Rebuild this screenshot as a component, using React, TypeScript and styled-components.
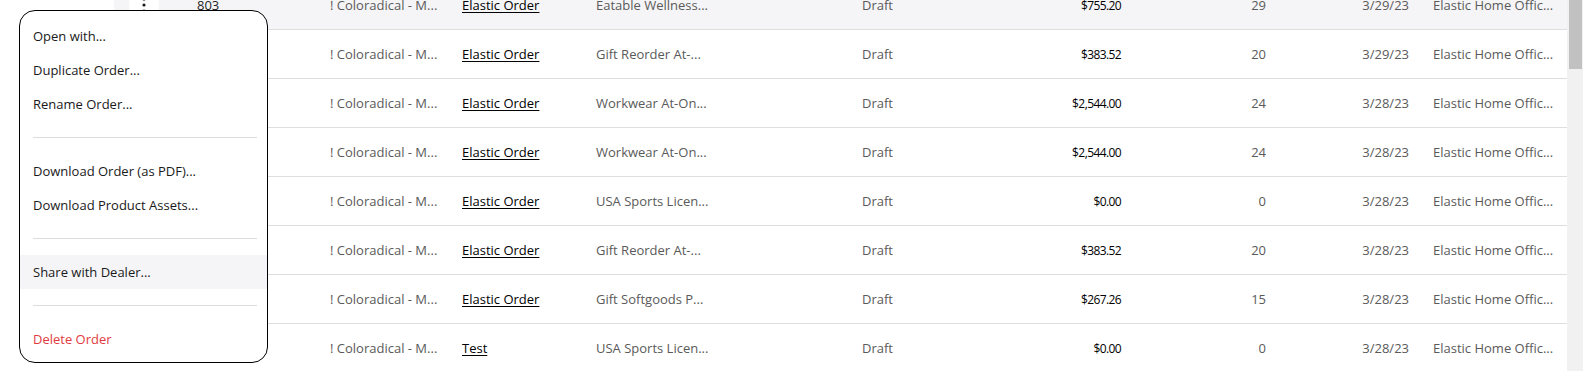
import React from 'react'
import styled, { createGlobalStyle } from 'styled-components'

const GlobalStyle = createGlobalStyle`
  html, body {
    margin: 0;
    padding: 0;
    background: #ffffff;
    font-family: 'Open Sans', 'Noto Sans', sans-serif;
  }
`

// page frame: table area + scrollbar gutter, white strip on the right
const Page = styled.div`
  position: relative;
  display: flex;
  height: 371px;
  padding-left: 114px;
  padding-right: 10px;
  overflow: hidden;
  box-sizing: border-box;
`

const Viewport = styled.div`
  flex: 1;
  overflow: hidden;
`

// first row is scrolled partly out of view
const Rows = styled.div`
  margin-top: -19px;
`

const Row = styled.div<{ $hover?: boolean }>`
  display: grid;
  grid-template-columns: 71px 133px 132px 134px 266px 150px 133px 145px 143px 146px;
  height: 48px;
  align-items: center;
  border-bottom: 1px solid #dedede;
  background: ${({ $hover }) => ($hover ? '#f5f5f7' : '#ffffff')};
`

const Cell = styled.div<{ $align?: 'left' | 'right' }>`
  padding: 0 12px;
  font-size: 13px;
  color: #5a5a5a;
  white-space: nowrap;
  overflow: hidden;
  text-align: ${({ $align }) => $align || 'left'};
`

const NumberCell = styled(Cell)`
  color: #1f1f1f;
`

const LinkCell = styled(Cell)`
  color: #000000;
  text-decoration: underline;
  text-underline-offset: 2px;
`

const MoneyCell = styled(Cell)`
  color: #000000;
  font-size: 12px;
  letter-spacing: -0.6px;
`

const KebabCell = styled.div`
  display: flex;
  align-items: center;
  padding-left: 15px;
`

const KebabButton = styled.div<{ $hover?: boolean }>`
  width: 30px;
  height: 30px;
  border-radius: 50%;
  display: flex;
  align-items: center;
  justify-content: center;
  background: ${({ $hover }) => ($hover ? '#ffffff' : 'transparent')};
`

const Gutter = styled.div`
  width: 16px;
  background: #f1f1f1;
  display: flex;
  flex-direction: column;
`

const Thumb = styled.div`
  height: 69px;
  margin: 0 1px 0 2px;
  background: #c1c1c1;
`

const Menu = styled.div`
  position: absolute;
  left: 19px;
  top: 10px;
  width: 249px;
  box-sizing: border-box;
  padding: 8px 0 6px;
  background: #ffffff;
  border: 1px solid #000000;
  border-radius: 16px;
  z-index: 2;
`

const MenuItem = styled.div<{ $danger?: boolean; $active?: boolean }>`
  height: 34px;
  display: flex;
  align-items: center;
  padding: 0 13px;
  font-size: 13px;
  color: ${({ $danger }) => ($danger ? '#e23b3f' : '#1a1a1a')};
  background: ${({ $active }) => ($active ? '#f5f5f7' : 'transparent')};
`

const Divider = styled.div`
  height: 1px;
  margin: 16px 10px 16px 13px;
  background: #dddddd;
`

const Dots = () => (
  <svg width="6" height="16" viewBox="0 0 6 16">
    <circle cx="3" cy="2" r="1.6" fill="#1a1a1a" />
    <circle cx="3" cy="8" r="1.6" fill="#1a1a1a" />
    <circle cx="3" cy="14" r="1.6" fill="#1a1a1a" />
  </svg>
)

type Order = {
  num: string
  name: string
  desc: string
  total: string
  qty: string
  date: string
}

const orders: Order[] = [
  { num: '803', name: 'Elastic Order', desc: 'Eatable Wellness...', total: '$755.20', qty: '29', date: '3/29/23' },
  { num: '802', name: 'Elastic Order', desc: 'Gift Reorder At-...', total: '$383.52', qty: '20', date: '3/29/23' },
  { num: '801', name: 'Elastic Order', desc: 'Workwear At-On...', total: '$2,544.00', qty: '24', date: '3/28/23' },
  { num: '800', name: 'Elastic Order', desc: 'Workwear At-On...', total: '$2,544.00', qty: '24', date: '3/28/23' },
  { num: '799', name: 'Elastic Order', desc: 'USA Sports Licen...', total: '$0.00', qty: '0', date: '3/28/23' },
  { num: '798', name: 'Elastic Order', desc: 'Gift Reorder At-...', total: '$383.52', qty: '20', date: '3/28/23' },
  { num: '797', name: 'Elastic Order', desc: 'Gift Softgoods P...', total: '$267.26', qty: '15', date: '3/28/23' },
  { num: '796', name: 'Test', desc: 'USA Sports Licen...', total: '$0.00', qty: '0', date: '3/28/23' },
]

const App = () => {
  return (
    <>
      <GlobalStyle />
      <Page>
        <Viewport>
          <Rows>
            {orders.map((o, i) => (
              <Row key={o.num} $hover={i === 0}>
                <KebabCell>
                  <KebabButton $hover={i === 0}>
                    <Dots />
                  </KebabButton>
                </KebabCell>
                <NumberCell>{o.num}</NumberCell>
                <Cell>! Coloradical - M...</Cell>
                <LinkCell>{o.name}</LinkCell>
                <Cell>{o.desc}</Cell>
                <Cell>Draft</Cell>
                <MoneyCell $align="right">{o.total}</MoneyCell>
                <Cell $align="right">{o.qty}</Cell>
                <Cell $align="right">{o.date}</Cell>
                <Cell>Elastic Home Offic...</Cell>
              </Row>
            ))}
          </Rows>
        </Viewport>
        <Gutter>
          <Thumb />
        </Gutter>

        {/* context menu opened from row 803 */}
        <Menu>
          <MenuItem>Open with...</MenuItem>
          <MenuItem>Duplicate Order...</MenuItem>
          <MenuItem>Rename Order...</MenuItem>
          <Divider />
          <MenuItem>Download Order (as PDF)...</MenuItem>
          <MenuItem>Download Product Assets...</MenuItem>
          <Divider />
          <MenuItem $active>Share with Dealer...</MenuItem>
          <Divider />
          <MenuItem $danger>Delete Order</MenuItem>
        </Menu>
      </Page>
    </>
  )
}

export default App
